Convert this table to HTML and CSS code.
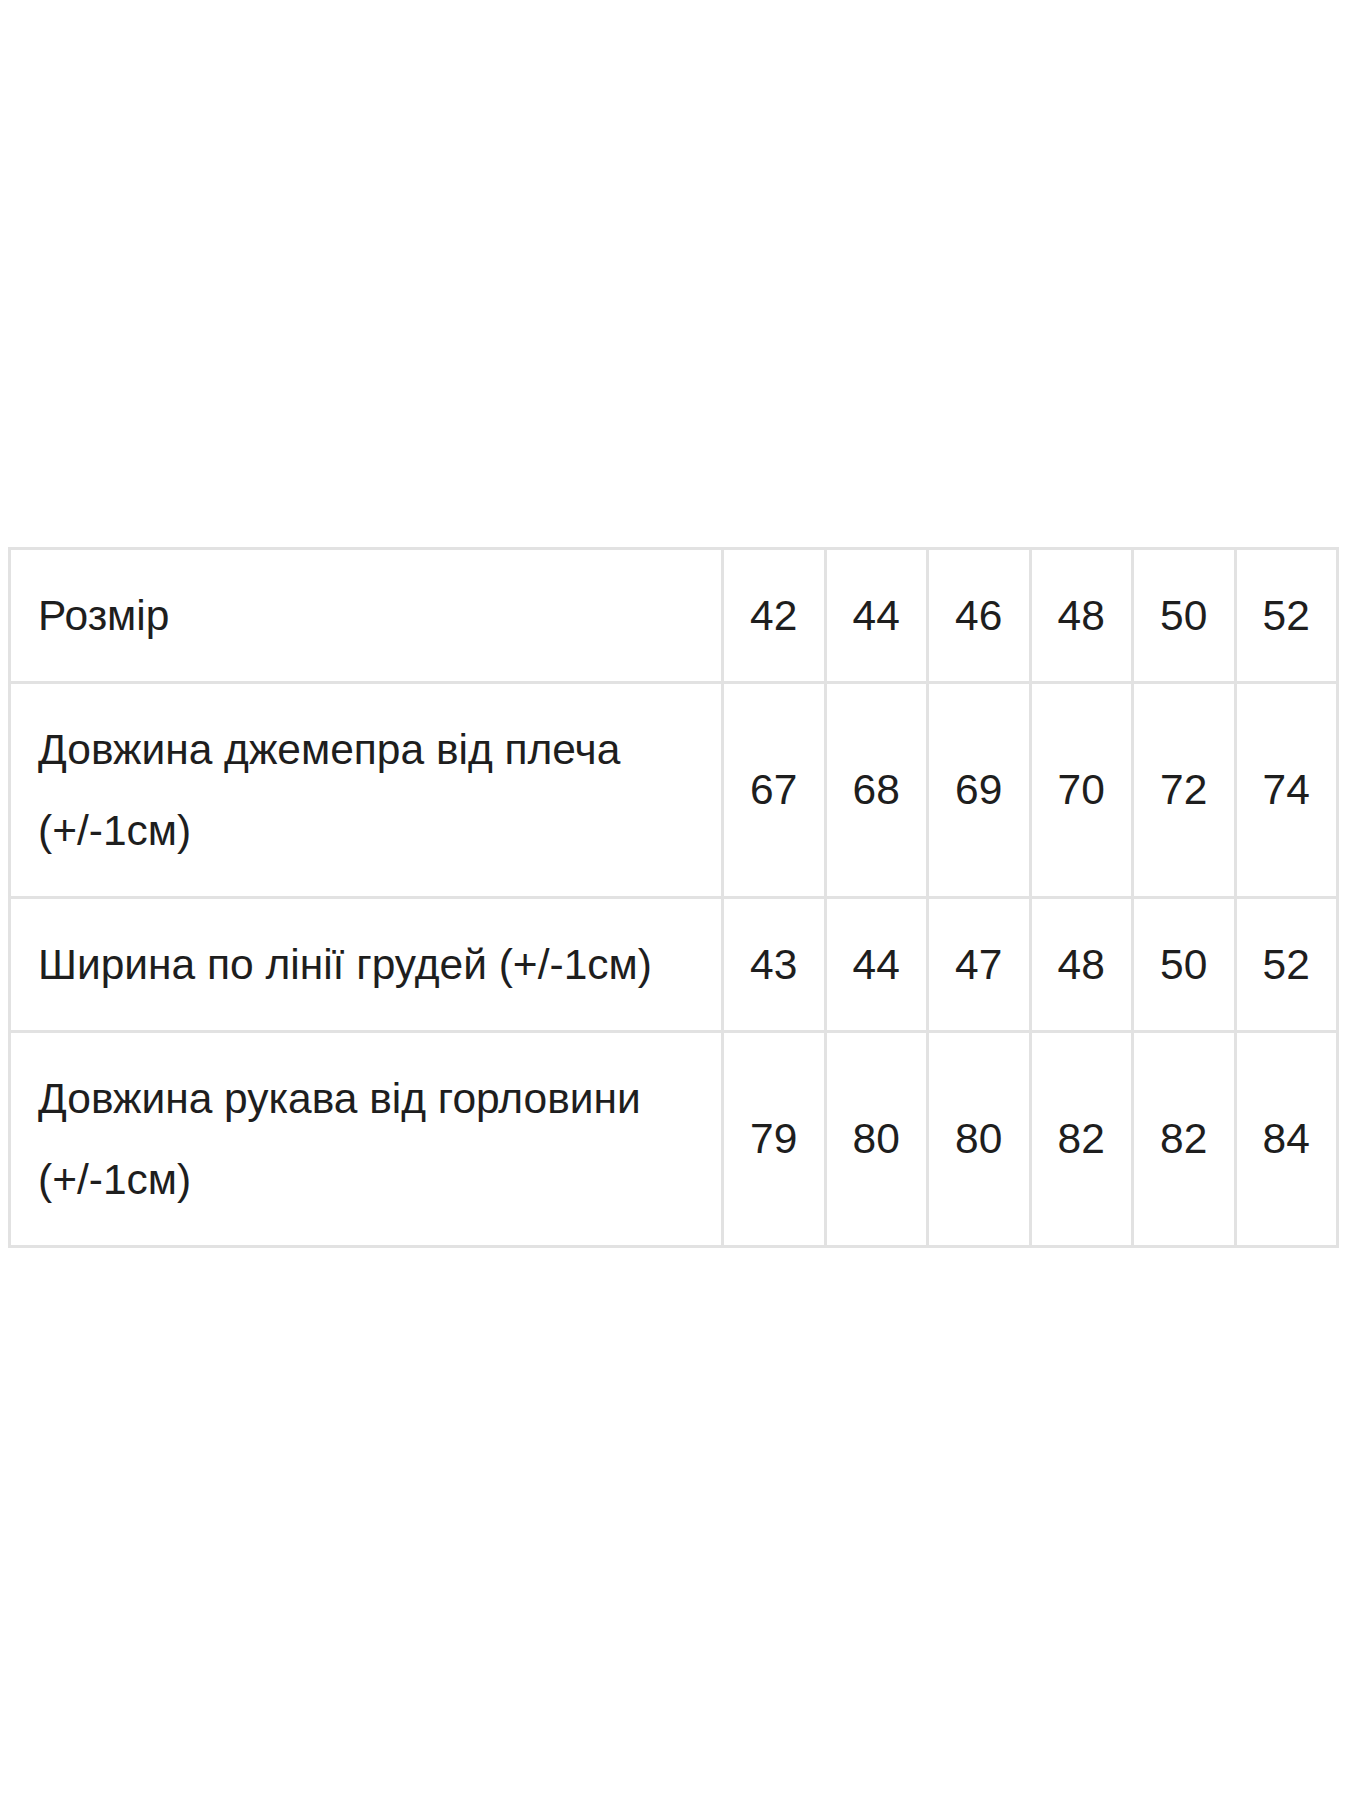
FILE: index.html
```html
<!DOCTYPE html>
<html lang="uk">
<head>
<meta charset="utf-8">
<title>Розмірна сітка</title>
<link rel="stylesheet" href="styles.css">
</head>
<body>
<main class="page">
  <table class="size-table">
    <colgroup>
      <col class="col-label">
      <col class="col-num"><col class="col-num"><col class="col-num">
      <col class="col-num"><col class="col-num"><col class="col-num">
    </colgroup>
    <tbody>
      <tr>
        <td class="label">Розмір</td>
        <td class="num">42</td><td class="num">44</td><td class="num">46</td>
        <td class="num">48</td><td class="num">50</td><td class="num">52</td>
      </tr>
      <tr>
        <td class="label">Довжина джемепра від плеча (+/-1см)</td>
        <td class="num">67</td><td class="num">68</td><td class="num">69</td>
        <td class="num">70</td><td class="num">72</td><td class="num">74</td>
      </tr>
      <tr>
        <td class="label">Ширина по лінії грудей (+/-1см)</td>
        <td class="num">43</td><td class="num">44</td><td class="num">47</td>
        <td class="num">48</td><td class="num">50</td><td class="num">52</td>
      </tr>
      <tr>
        <td class="label">Довжина рукава від горловини (+/-1см)</td>
        <td class="num">79</td><td class="num">80</td><td class="num">80</td>
        <td class="num">82</td><td class="num">82</td><td class="num">84</td>
      </tr>
    </tbody>
  </table>
</main>
</body>
</html>
```

FILE: styles.css
```css
html, body {
  margin: 0;
  padding: 0;
  background: #ffffff;
}

body {
  font-family: "Liberation Sans", Arial, sans-serif;
  color: #1e1e1e;
}

.page {
  padding: 547px 0 0 8px;
  min-height: 1800px;
  box-sizing: border-box;
}

.size-table {
  width: 1331px;
  border-collapse: collapse;
  table-layout: fixed;
  border: 3px solid #e2e2e2;
}

.col-label {
  width: 713px;
}

.size-table td {
  border: 3px solid #e2e2e2;
  padding: 24.5px 27px 25.5px;
  font-size: 42.5px;
  line-height: 81px;
  vertical-align: middle;
}

.size-table .label {
  text-align: left;
}

.size-table .num {
  text-align: center;
  padding-left: 0;
  padding-right: 0;
}
```
